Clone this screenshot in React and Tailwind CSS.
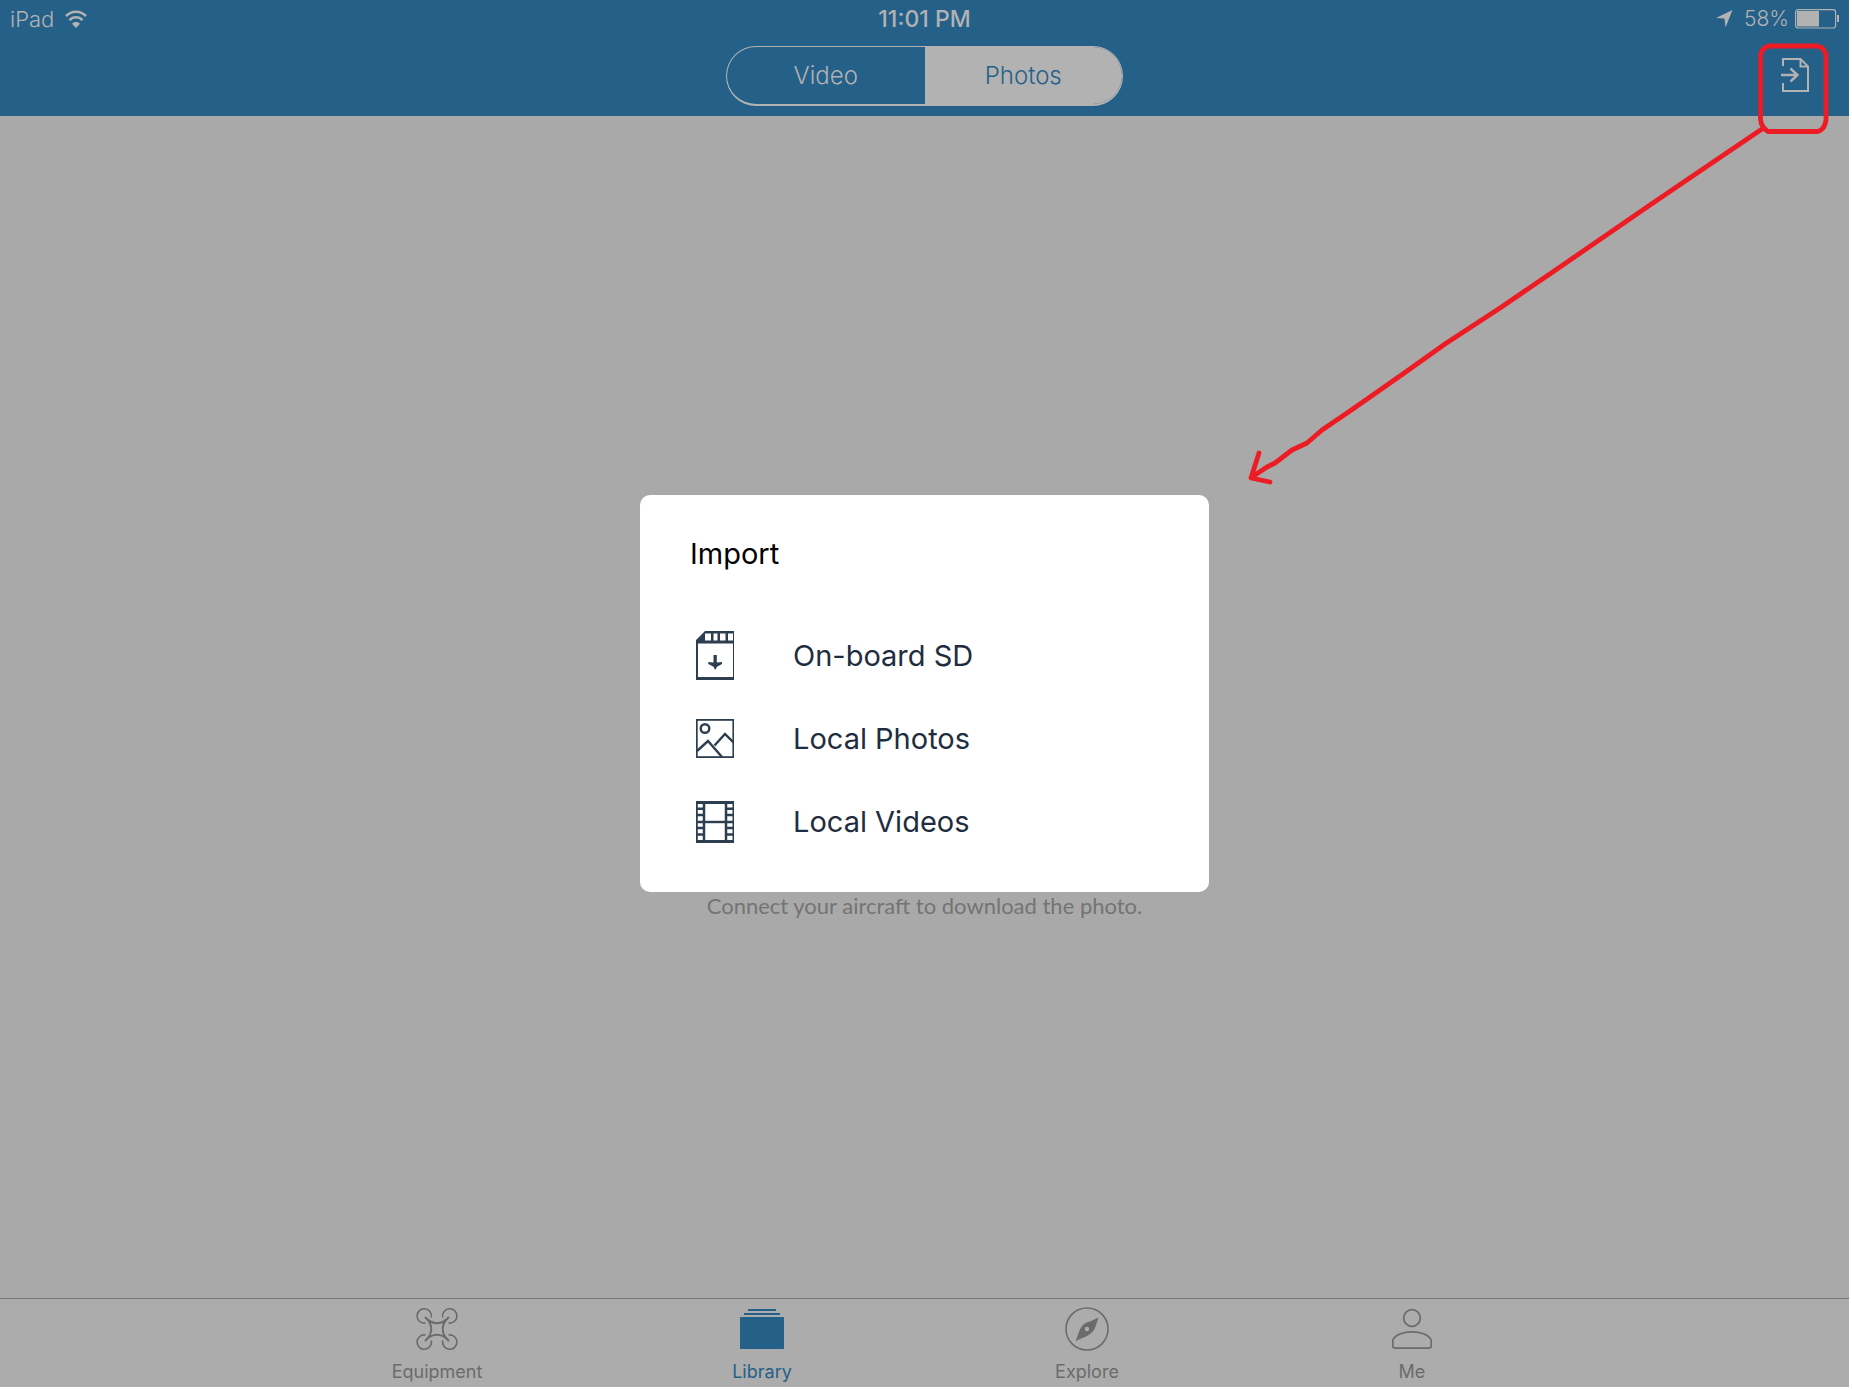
import React from 'react';

const WifiIcon = () => (
  <svg width="22" height="18" viewBox="0 0 22 18" fill="none" stroke="currentColor" strokeWidth="2.6" aria-hidden="true">
    <path d="M1 6C6.500 0.300 15.500 0.300 21 6" />
    <path d="M4.500 10.200C8 6.300 14 6.300 17.500 10.200" />
    <path d="M7 13.800C9 11.400 13 11.400 15 13.800L11 18Z" fill="currentColor" stroke="none" />
  </svg>
);

const LocationIcon = () => (
  <svg width="17" height="18" viewBox="0 0 17 18" fill="currentColor" aria-hidden="true">
    <path d="M16.500 0L9.500 17.500L8.500 8.500L0 8Z" />
  </svg>
);

const BatteryIcon = () => (
  <svg width="44" height="20" viewBox="0 0 44 20" aria-hidden="true">
    <rect x="0.600" y="0.600" width="40" height="18.400" rx="2.500" fill="none" stroke="currentColor" strokeWidth="1.200" />
    <rect x="2" y="2" width="22" height="15.500" fill="currentColor" />
    <rect x="42" y="6" width="2" height="7" fill="currentColor" />
  </svg>
);

const ImportIcon = () => (
  <svg width="28" height="34" viewBox="0 0 28 34" fill="none" stroke="currentColor" strokeWidth="2" aria-hidden="true">
    <path d="M2 8V1H19.500L27 8.500V33H2V25" />
    <path d="M19.500 1V8.500H27" />
    <path d="M0 17H16M9.500 10.500L16.500 17L9.500 23.500" strokeWidth="2.400" />
  </svg>
);

const SdCardIcon = () => (
  <svg width="38" height="49" viewBox="0 0 38 49" fill="currentColor" aria-hidden="true">
    <path
      fillRule="evenodd"
      d="M9 0H38V49H0V9ZM9 2.500V9.500H15V2.500ZM17.500 2.500V9.500H21.500V2.500ZM24 2.500V9.500H29.500V2.500ZM32 2.500V9.500H37V2.500ZM2 12.500V46H37V12.500Z"
    />
    <path d="M17.500 24H20.800V31.500L26 31V33L21 35.800L19.200 39L17.500 35.800L12.300 33V31L17.500 31.500Z" />
  </svg>
);

const PhotoIcon = () => (
  <svg width="38" height="39" viewBox="0 0 38 39" fill="none" stroke="currentColor" strokeWidth="2.400" aria-hidden="true">
    <rect x="0.800" y="0.900" width="36.500" height="37.200" strokeWidth="1.800" />
    <circle cx="9" cy="9.500" r="4.300" />
    <path d="M1 32L12 22L26 38M18.500 26.500L29 15L37.500 23.500" />
  </svg>
);

const FilmIcon = () => (
  <svg width="38" height="42" viewBox="0 0 38 42" fill="none" stroke="currentColor" aria-hidden="true">
    <path d="M0 1.500H38M0 40.500H38" strokeWidth="3" />
    <path d="M8 0V42M30 0V42" strokeWidth="2.500" />
    <path d="M8 21H30" strokeWidth="2.400" />
    <path d="M0.900 0V42M37.400 0V42" strokeWidth="1.800" />
    <path
      d="M0 7.800H8M0 14H8M0 21H8M0 27H8M0 33.500H8M30 7.800H38M30 14H38M30 21H38M30 27H38M30 33.500H38"
      strokeWidth="2.400"
    />
  </svg>
);

const DroneIcon = () => (
  <svg width="44" height="44" viewBox="0 0 44 44" fill="none" stroke="currentColor" strokeWidth="1.600" aria-hidden="true">
    <path d="M10.500 16A7.200 7.200 0 1 1 16.300 10.500M33.500 16A7.200 7.200 0 1 0 27.700 10.500M10.500 28A7.200 7.200 0 1 0 16.300 33.500M33.500 28A7.200 7.200 0 1 1 27.700 33.500" />
    <path
      d="M10.500 10.500C17.500 18.200 26.500 18.200 33.500 10.500C25.800 17.500 25.800 26.500 33.500 33.500C26.500 25.800 17.500 25.800 10.500 33.500C18.200 26.500 18.200 17.500 10.500 10.500Z"
      strokeWidth="1.900"
      strokeLinejoin="round"
    />
  </svg>
);

const LibraryIcon = () => (
  <svg width="44" height="44" viewBox="0 0 44 44" fill="currentColor" aria-hidden="true">
    <rect x="8" y="2" width="28" height="2" />
    <rect x="4" y="6" width="36" height="2" />
    <rect x="0" y="10" width="44" height="32" rx="0.800" />
  </svg>
);

const CompassIcon = () => (
  <svg width="44" height="44" viewBox="0 0 44 44" aria-hidden="true">
    <circle cx="22" cy="22" r="21" fill="none" stroke="currentColor" strokeWidth="1.600" />
    <path
      fill="currentColor"
      fillRule="evenodd"
      d="M33.500 10.500L30.500 19.500C29 25 24 28.500 18.500 30.500L10.500 34L14 25C15.500 19.500 19.500 15.500 25 14.500ZM22 19.800A2.200 2.200 0 1 0 22 24.200A2.200 2.200 0 1 0 22 19.800Z"
    />
  </svg>
);

const PersonIcon = () => (
  <svg width="44" height="44" viewBox="0 0 44 44" fill="none" stroke="currentColor" strokeWidth="1.700" aria-hidden="true">
    <circle cx="22" cy="11" r="8.300" />
    <path d="M2.800 39V33C5 28 13 24.800 22 24.800S39 28 41.200 33V39Q41.200 41.200 39 41.200H5Q2.800 41.200 2.800 39Z" />
  </svg>
);

const importSources = [
  { label: 'On-board SD', icon: SdCardIcon },
  { label: 'Local Photos', icon: PhotoIcon },
  { label: 'Local Videos', icon: FilmIcon },
];

const tabs = [
  { label: 'Equipment', icon: DroneIcon },
  { label: 'Library', icon: LibraryIcon, active: true },
  { label: 'Explore', icon: CompassIcon },
  { label: 'Me', icon: PersonIcon },
];

const Header = () => (
  <header className="bg-[#256088] text-[#b2b2b2]">
    <div className="grid grid-cols-[1fr_auto_1fr] items-center h-[38px] px-[10px] text-[22px] leading-6">
      <div className="flex items-center gap-[11px]">
        <span className="font-light">iPad</span>
        <WifiIcon />
      </div>
      <span className="text-[23px] font-medium">11:01 PM</span>
      <div className="flex items-center justify-end">
        <LocationIcon />
        <span className="ml-[11px] mr-[6px] text-[21px] font-light">58%</span>
        <BatteryIcon />
      </div>
    </div>

    <div className="grid grid-cols-[1fr_auto_1fr] items-start h-[78px] pt-2 px-10">
      <div className="grid grid-cols-2 col-start-2 w-[397px] h-[60px] rounded-full border border-b-2 border-[#b2b2b2] overflow-hidden text-2xl font-light">
        <button type="button" className="cursor-pointer">Video</button>
        <button type="button" className="bg-[#b2b2b2] text-[#256088] cursor-pointer">Photos</button>
      </div>
      <button type="button" aria-label="Import" className="justify-self-end mt-3 cursor-pointer">
        <ImportIcon />
      </button>
    </div>
  </header>
);

const ImportDialog = () => (
  <div className="absolute inset-0 flex items-center justify-center">
    <div role="dialog" aria-labelledby="import-title" className="w-[569px] rounded-[10px] bg-white pt-[41px] pb-[29px]">
      <h2 id="import-title" className="pl-[50px] mb-[42px] text-[29px] leading-9 text-black">Import</h2>
      <ul>
        {importSources.map(({ label, icon: Icon }) => (
          <li key={label}>
            <button type="button" className="flex items-center w-full h-[83px] pl-14 gap-[59px] text-[#2c3e50] cursor-pointer">
              <Icon />
              <span className="text-[29px] leading-9 text-[#1f2d40]">{label}</span>
            </button>
          </li>
        ))}
      </ul>
    </div>
  </div>
);

const TabBar = () => (
  <nav className="border-t border-[#787878] bg-[#acacac]">
    <div className="grid grid-cols-4 max-w-[1300px] mx-auto">
      {tabs.map(({ label, icon: Icon, active }) => (
        <a
          key={label}
          href="#"
          className={`flex flex-col items-center gap-[9px] pt-2 pb-[3px] text-lg leading-6 ${active ? 'text-[#256088]' : 'text-[#6b6b6b]'}`}
        >
          <Icon />
          <span>{label}</span>
        </a>
      ))}
    </div>
  </nav>
);

// Hand-drawn marker around the import button, pointing to the dialog
const Callout = () => (
  <svg
    className="absolute top-0 right-0 pointer-events-none"
    width="609"
    height="500"
    viewBox="1240 0 609 500"
    fill="none"
    stroke="#ed1c24"
    strokeWidth="4.800"
    strokeLinecap="round"
    strokeLinejoin="round"
    aria-hidden="true"
  >
    <path d="M1768 46H1818Q1826 49 1826 57V120Q1825 129 1818 131.500H1768Q1761 127 1760.500 119V56Q1761 49 1768 46Z" />
    <path d="M1762 129L1728 152L1650 205L1560 267L1500 308L1445 344L1400 376L1350 411L1322 430L1307 443L1292 450L1275 463L1267 467L1252 477" />
    <path d="M1259 453L1251 478L1270 482" />
  </svg>
);

const App = () => {
  return (
    <div className="flex flex-col min-h-screen bg-white pr-[3px] pb-[3px] font-['Inter','Liberation_Sans',sans-serif]">
      <div className="relative flex flex-col flex-1 bg-[#a9a9a9]">
        <Header />
        <main className="flex flex-1 items-center justify-center pt-[397px]">
          <p className="font-['Lato',sans-serif] text-[22px] leading-7 text-[#747474]">
            Connect your aircraft to download the photo.
          </p>
        </main>
        <TabBar />
        <ImportDialog />
        <Callout />
      </div>
    </div>
  );
};

export default App;
